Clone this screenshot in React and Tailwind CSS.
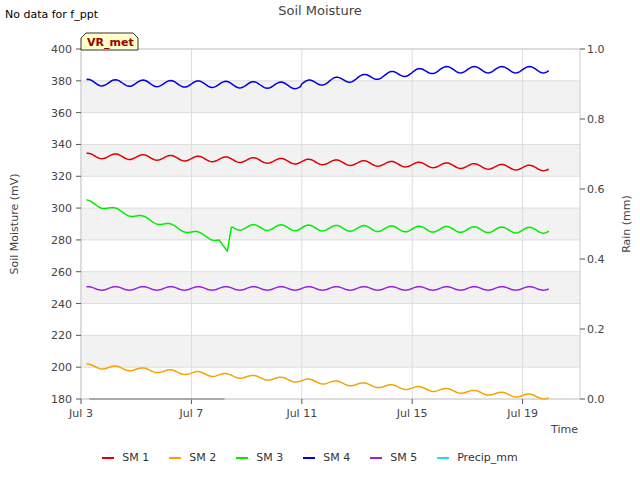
const X0 = 81, X1 = 580, Y0 = 49, Y1 = 399
const xd = (d) => 81 + (d - 3) * 27.6
const ys = (v) => Y1 - ((v - 180) / 220) * (Y1 - Y0)

function series(fn) {
  const pts = []
  for (let d = 3.2; d <= 20.0; d += 0.05) pts.push(`${xd(d).toFixed(1)},${ys(fn(d)).toFixed(1)}`)
  return pts.join(' ')
}
const w = (d) => Math.sin(d * 2 * Math.PI)
const lerp = (a, b, t) => a + (b - a) * t

const lines = [
  { name: 'SM 1', color: '#e00000', fn: (d) => lerp(333, 325, (d - 3) / 17) + 1.6 * w(d) },
  { name: 'SM 2', color: '#f5a300', fn: (d) => lerp(201, 181, (d - 3) / 17) + 1.2 * w(d) },
  {
    name: 'SM 3', color: '#00ee00',
    fn: (d) => {
      if (d < 8.0) return lerp(305, 280, (d - 3) / 5) + 1.3 * w(d)
      if (d < 8.3) return lerp(280, 273, (d - 8) / 0.3)
      if (d < 8.45) return 273 + (d - 8.3) * 100
      return lerp(288, 286, (d - 8.45) / 11.5) + 1.8 * w(d)
    },
  },
  {
    name: 'SM 4', color: '#0000dd',
    fn: (d) => (d < 11 ? lerp(379, 377, (d - 3) / 8) : lerp(378, 387, Math.min(1, (d - 11) / 5))) + 2 * w(d),
  },
  { name: 'SM 5', color: '#9a1ee6', fn: (d) => 249.5 + 1.1 * w(d) },
]

export default function App() {
  const yt = [180, 200, 220, 240, 260, 280, 300, 320, 340, 360, 380, 400]
  const rt = [0, 0.2, 0.4, 0.6, 0.8, 1.0]
  const xt = [[3, 'Jul 3'], [7, 'Jul 7'], [11, 'Jul 11'], [15, 'Jul 15'], [19, 'Jul 19']]
  return (
    <div className="w-[640px] h-[480px] bg-white flex flex-col" style={{ fontFamily: '"DejaVu Sans", sans-serif' }}>
      <svg width="640" height="445" className="block" fontFamily="DejaVu Sans, sans-serif">
        <text x="5" y="18" fontSize="11">No data for f_ppt</text>
        <text x="320" y="15" fontSize="13" fill="#444" textAnchor="middle">Soil Moisture</text>
        {[360, 320, 280, 240, 200].map((v) => (
          <rect key={v} x={X0} y={ys(v + 20)} width={X1 - X0} height={ys(v) - ys(v + 20)} fill="#f2f2f2" />
        ))}
        {yt.map((v) => <line key={v} x1={X0} x2={X1} y1={ys(v)} y2={ys(v)} stroke="#ddd" />)}
        {xt.map(([d]) => <line key={d} x1={xd(d)} x2={xd(d)} y1={Y0} y2={Y1} stroke="#ddd" />)}
        <rect x={X0} y={Y0} width={X1 - X0} height={Y1 - Y0} fill="none" stroke="#ccc" />
        {yt.map((v) => (
          <g key={v}>
            <line x1={X0 - 5} x2={X0} y1={ys(v)} y2={ys(v)} stroke="#555" />
            <text x={X0 - 9} y={ys(v) + 4} fontSize="11" fill="#444" textAnchor="end">{v}</text>
          </g>
        ))}
        {rt.map((v) => {
          const y = Y1 - v * (Y1 - Y0)
          return (
            <g key={v}>
              <line x1={X1} x2={X1 + 5} y1={y} y2={y} stroke="#555" />
              <text x={X1 + 7} y={y + 4} fontSize="11" fill="#444">{v.toFixed(1)}</text>
            </g>
          )
        })}
        {xt.map(([d, l]) => (
          <g key={d}>
            <line x1={xd(d)} x2={xd(d)} y1={Y1} y2={Y1 + 5} stroke="#555" />
            <text x={xd(d)} y={Y1 + 18} fontSize="11" fill="#444" textAnchor="middle">{l}</text>
          </g>
        ))}
        <text x="578" y="433" fontSize="11" fill="#444" textAnchor="end">Time</text>
        <text transform="translate(18 224) rotate(-90)" fontSize="11" fill="#444" textAnchor="middle">Soil Moisture (mV)</text>
        <text transform="translate(630 224) rotate(-90)" fontSize="11" fill="#444" textAnchor="middle">Rain (mm)</text>
        <line x1={xd(3.3)} x2={xd(8.2)} y1={Y1} y2={Y1} stroke="#999" strokeWidth="1.5" />
        {lines.map((l) => <polyline key={l.name} points={series(l.fn)} fill="none" stroke={l.color} strokeWidth="1.5" />)}
        <path d="M81 50 V38 L86 33 H133 L138 38 V50 Z" fill="#ffffc8" stroke="#333" />
        <text x="87" y="46" fontSize="11" fontWeight="bold" fill="#990000">VR_met</text>
      </svg>
      <div className="flex justify-center gap-[20px] text-[11px] text-[#333] pt-[5px] pr-[20px]">
        {[...lines, { name: 'Precip_mm', color: '#22ddee' }].map((l) => (
          <div key={l.name} className="flex items-center gap-[8px]">
            <span className="w-[12px] h-[2px]" style={{ background: l.color }} />
            {l.name}
          </div>
        ))}
      </div>
    </div>
  )
}
